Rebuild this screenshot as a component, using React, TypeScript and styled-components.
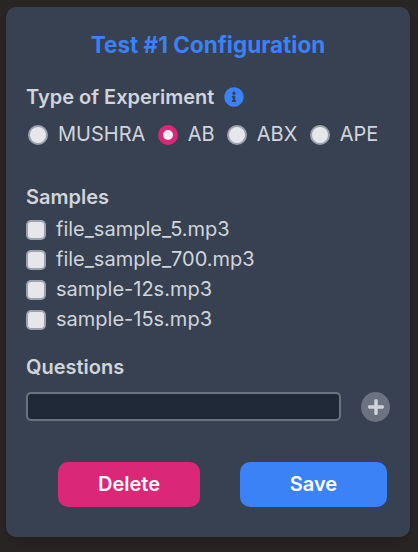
import React, { useState } from "react";
import styled, { createGlobalStyle } from "styled-components";
import { FaInfoCircle, FaPlus } from "react-icons/fa";

const GlobalStyle = createGlobalStyle`
  *, *::before, *::after { box-sizing: border-box; }
  body {
    margin: 0;
    background: #292524;
    font-family: Inter, "Liberation Sans", sans-serif;
    font-size: 20px;
    line-height: 30px;
    color: #d1d5db;
  }
`;

const Page = styled.main`
  height: 552px;
  padding: 7px 8px 15px 6px;
  overflow: hidden;
`;

const Panel = styled.section`
  display: flex;
  flex-direction: column;
  height: 530px;
  padding: 23px 23px 30px 20px;
  border-radius: 10px;
  background: #374151;
  box-shadow: 0 12px 19px -4px rgba(0, 0, 0, 0.1), 0 5px 8px -5px rgba(0, 0, 0, 0.1);
`;

const Title = styled.h1`
  margin: 0 0 22px 3px;
  font-size: 22.5px;
  font-weight: 700;
  line-height: 30px;
  text-align: center;
  color: #3b82f6;
`;

const Heading = styled.h2`
  display: flex;
  align-items: center;
  gap: 10px;
  margin: 0;
  font-size: 20px;
  font-weight: 600;
  line-height: 30px;
  white-space: nowrap;

  svg { color: #3b82f6; }
`;

const RadioRow = styled.div`
  display: flex;
  gap: 12.3px;
  margin: 7px 0 33px 2px;
`;

const CheckList = styled.div`
  display: flex;
  flex-direction: column;
  margin: 2px 0 18px;
`;

const Option = styled.label`
  display: flex;
  align-items: center;
  gap: 10px;
  height: 30px;
  white-space: nowrap;
`;

const Control = styled.input`
  appearance: none;
  flex: none;
  width: 20px;
  height: 20px;
  margin: 2px 0 0;
  border: 2px solid #9ca3af;
  border-radius: ${(p) => (p.type === "radio" ? "50%" : "5px")};
  background: #e5e7eb;

  &:checked {
    border: ${(p) => (p.type === "radio" ? "5px" : "2px")} solid #db2777;
    background: #f3f4f6;
  }
`;

const QuestionRow = styled.div`
  display: flex;
  align-items: flex-start;
  gap: 20px;
  margin-top: 10px;
`;

const QuestionInput = styled.input`
  width: 315px;
  height: 29px;
  padding: 0 8px;
  border: 2px solid #6b7280;
  border-radius: 5px;
  outline: none;
  background: #1f2937;
  color: inherit;
  font: inherit;
`;

const AddButton = styled.button`
  display: flex;
  align-items: center;
  justify-content: center;
  flex: none;
  width: 29px;
  height: 30px;
  padding: 0;
  border: 0;
  border-radius: 50%;
  background: #6b7280;
  color: #d1d5db;
`;

const Actions = styled.div`
  display: flex;
  justify-content: space-between;
  margin: auto 0 0 32px;
`;

const ActionButton = styled.button<{ $color: string; $width: number }>`
  width: ${(p) => p.$width}px;
  height: 45px;
  padding: 0 0 2px;
  border: 0;
  border-radius: 10px;
  background: ${(p) => p.$color};
  color: #fff;
  font: 600 20px/30px Inter, sans-serif;
`;

const types = ["MUSHRA", "AB", "ABX", "APE"];
const samples = ["file_sample_5.mp3", "file_sample_700.mp3", "sample-12s.mp3", "sample-15s.mp3"];

export default function App() {
  const [type, setType] = useState("AB");
  return (
    <Page>
      <GlobalStyle />
      <Panel>
        <Title>Test #1 Configuration</Title>
        <Heading>
          Type of Experiment
          <FaInfoCircle size={20} />
        </Heading>
        <RadioRow>
          {types.map((t) => (
            <Option key={t}>
              <Control type="radio" name="type" checked={type === t} onChange={() => setType(t)} />
              {t}
            </Option>
          ))}
        </RadioRow>
        <Heading>Samples</Heading>
        <CheckList>
          {samples.map((s) => (
            <Option key={s}>
              <Control type="checkbox" />
              {s}
            </Option>
          ))}
        </CheckList>
        <Heading>Questions</Heading>
        <QuestionRow>
          <QuestionInput type="text" aria-label="Question" />
          <AddButton aria-label="Add question">
            <FaPlus size={18} />
          </AddButton>
        </QuestionRow>
        <Actions>
          <ActionButton $color="#db2777" $width={142}>Delete</ActionButton>
          <ActionButton $color="#3b82f6" $width={147}>Save</ActionButton>
        </Actions>
      </Panel>
    </Page>
  );
}
